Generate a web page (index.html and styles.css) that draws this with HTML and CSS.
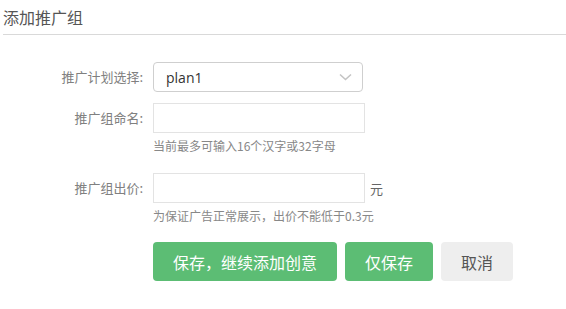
FILE: index.html
```html
<!DOCTYPE html>
<html lang="zh">
<head>
<meta charset="utf-8">
<link rel="stylesheet" href="styles.css">
</head>
<body>
<div class="page">
  <div class="title">添加推广组</div>
  <form class="form">
    <div class="row">
      <label class="label">推广计划选择:</label>
      <div class="field">
        <div class="select">
          <span>plan1</span>
          <svg class="chev" width="13" height="8" viewBox="0 0 13 8"><path d="M1 1.5 L6.5 6.5 L12 1.5" fill="none" stroke="#c4c4c4" stroke-width="1.6"/></svg>
        </div>
      </div>
    </div>
    <div class="row row-name">
      <label class="label">推广组命名:</label>
      <div class="field">
        <div class="input"></div>
        <div class="hint">当前最多可输入16个汉字或32字母</div>
      </div>
    </div>
    <div class="row row-price">
      <label class="label">推广组出价:</label>
      <div class="field">
        <div class="inline">
          <div class="input"></div>
          <span class="unit">元</span>
        </div>
        <div class="hint">为保证广告正常展示，出价不能低于0.3元</div>
      </div>
    </div>
    <div class="actions">
      <button type="button" class="btn btn-green btn-wide">保存，继续添加创意</button>
      <button type="button" class="btn btn-green btn-mid">仅保存</button>
      <button type="button" class="btn btn-gray">取消</button>
    </div>
  </form>
</div>
</body>
</html>
```
FILE: styles.css
```css
* { box-sizing: border-box; }
html, body { margin: 0; padding: 0; background: #fff; }
body {
  font-family: "Microsoft YaHei", "Noto Sans CJK SC", "Noto Sans", sans-serif;
  color: #666;
}
.page { padding: 0 0 0 3px; }
.title {
  font-size: 16px;
  line-height: 20px;
  color: #555;
  padding-top: 7px;
  padding-bottom: 7px;
  border-bottom: 1px solid #d9d9d9;
  height: 35px;
}
.form { padding-top: 27px; }
.row { display: flex; align-items: flex-start; }
.label {
  width: 150px;
  padding-right: 10px;
  text-align: right;
  font-size: 13px;
  line-height: 30px;
  color: #808080;
  flex: none;
}
.field { display: flex; flex-direction: column; }
.select {
  width: 210px;
  height: 30px;
  border: 1px solid #cfcfcf;
  border-radius: 4px;
  display: flex;
  align-items: center;
  justify-content: space-between;
  padding: 0 10px 0 12px;
  font-family: "Open Sans", "Noto Sans", sans-serif;
  font-size: 14px;
  color: #333;
}
.chev { display: block; }
.row-name { margin-top: 11px; }
.row-price { margin-top: 19px; }
.input {
  width: 212px;
  height: 30px;
  border: 1px solid #e3e3e3;
  background: #fff;
}
.inline { display: flex; align-items: center; }
.unit { font-size: 13px; color: #666; margin-left: 5px; }
.hint {
  font-size: 12px;
  line-height: 16px;
  color: #888;
  margin-top: 5px;
}
.actions {
  display: flex;
  gap: 8px;
  margin-top: 18px;
  padding-left: 150px;
}
.btn {
  height: 39px;
  border: none;
  border-radius: 4px;
  font-family: "Microsoft YaHei", "Noto Sans CJK SC", sans-serif;
  font-size: 16px;
  padding: 0;
  cursor: pointer;
}
.btn-green { background: #5cbd74; color: #fff; }
.btn-wide { width: 184px; }
.btn-mid { width: 88px; }
.btn-gray { background: #eeeeee; color: #555; width: 72px; }
```
